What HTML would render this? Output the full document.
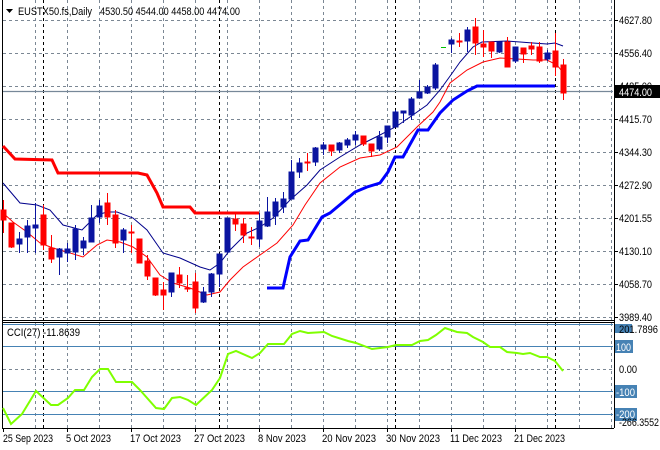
<!DOCTYPE html>
<html><head><meta charset="utf-8"><style>
html,body{margin:0;padding:0;background:#fff;width:660px;height:450px;overflow:hidden}
svg{display:block;font-family:"Liberation Sans","DejaVu Sans",sans-serif;font-size:11px}
</style></head><body>
<svg width="660" height="450" viewBox="0 0 660 450" xmlns="http://www.w3.org/2000/svg">
<rect width="660" height="450" fill="#fff"/>
<g stroke="#7b8794" stroke-width="1" stroke-dasharray="3,3" fill="none">
<path d="M3 20.5H613M3 53.5H613M3 86.5H613M3 119.5H613M3 152.5H613M3 185.5H613M3 218.5H613M3 251.5H613M3 284.5H613M3 317.5H613"/>
<path d="M35.5 0V320M67.5 0V320M99.5 0V320M131.5 0V320M163.5 0V320M195.5 0V320M227.5 0V320M259.5 0V320M291.5 0V320M323.5 0V320M355.5 0V320M387.5 0V320M419.5 0V320M451.5 0V320M483.5 0V320M515.5 0V320M547.5 0V320M579.5 0V320M611.5 0V320"/>
<path d="M35.5 323V428M67.5 323V428M99.5 323V428M131.5 323V428M163.5 323V428M195.5 323V428M227.5 323V428M259.5 323V428M291.5 323V428M323.5 323V428M355.5 323V428M387.5 323V428M419.5 323V428M451.5 323V428M483.5 323V428M515.5 323V428M547.5 323V428M579.5 323V428M611.5 323V428"/>
<path d="M3 369.5H613"/>
</g>
<g stroke="#000" stroke-width="1" stroke-dasharray="3,3" fill="none">
<path d="M43.5 0V320M219.5 0V320M395.5 0V320M555.5 0V320M43.5 323V428M219.5 323V428M395.5 323V428M555.5 323V428"/>
</g>
<path d="M3 91.5H613" stroke="#778899" stroke-width="1.2"/>
<g stroke="#4682b4" stroke-width="1">
<path d="M3 324.5H613M3 346.5H613M3 391.5H613M3 414.5H613"/>
</g>
<g stroke="#000" stroke-width="1" fill="none">
<path d="M2.5 0V428M614.5 0V428M2 320.5H614M2 322.5H614M2 428.5H614"/>
<path d="M614 20.5H618M614 53.5H618M614 86.5H618M614 119.5H618M614 152.5H618M614 185.5H618M614 218.5H618M614 251.5H618M614 284.5H618M614 317.5H618"/>
<path d="M3.5 428V432M67.5 428V432M131.5 428V432M195.5 428V432M259.5 428V432M323.5 428V432M387.5 428V432M451.5 428V432M515.5 428V432"/>
</g>
<polyline fill="none" stroke="#ff0000" stroke-width="3" points="3,146 15,159 52,160 58,173 138,173 147,175 157,193 163,207 190,207 195,213 259,213"/>
<polyline fill="none" stroke="#0000ff" stroke-width="3" points="267,288 283,288 290,257 300,241 308,240 322,217 330,213 342,203 355,192 367,187 380,183 388,172 395,157 403,157 418,130 428,130 440,113 453,100 467,91 477,86 555,86"/>
<polyline fill="none" stroke="#00008b" stroke-width="1" points="3,183 20,203 37,205 50,210 63,225 82,230 97,215 107,212 117,212 133,218 147,230 163,253 180,258 200,267 210,270 220,263 230,250 247,233 260,227 273,218 290,200 307,185 320,170 340,157 360,145 380,135 397,126 410,117 427,105 440,90 453,72 460,62 473,47 482,42 507,41 520,42 533,43 547,44 555,43 563,46"/>
<polyline fill="none" stroke="#ff0000" stroke-width="1" points="3,213 13,222 27,232 40,243 53,248 67,252 83,257 97,245 107,240 120,242 133,247 147,257 160,275 173,283 190,288 207,295 220,292 230,280 243,267 260,255 277,243 293,225 305,205 320,183 340,167 360,158 380,155 397,147 417,127 433,112 440,102 450,83 467,70 483,62 500,58 517,59 533,60 547,60 557,65 565,75"/>
<g stroke="#ff0000" fill="#ff0000">
<path d="M3.5 200V233M11.5 223V248M43.5 205V250M51.5 235V263M107.5 193V225M115.5 210V248M131.5 225V253M139.5 239V263M147.5 255V280M155.5 278V296M163.5 282V310M179.5 267V288M187.5 275V292M195.5 273V313M235.5 214V231M243.5 218V243M251.5 227V245M307.5 153V171M331.5 145V156M363.5 136V146M371.5 144V157M459.5 33V47M475.5 18V55M483.5 30V57M491.5 42V58M507.5 37V67M523.5 48V63M531.5 42V55M539.5 42V63M555.5 33V76M563.5 59V100" fill="none"/>
<rect x="1" y="210" width="5" height="10"/><rect x="9" y="223" width="5" height="24"/><rect x="41" y="215" width="5" height="30"/><rect x="49" y="248" width="5" height="11"/><rect x="105" y="203" width="5" height="14"/><rect x="113" y="215" width="5" height="28"/><rect x="129" y="232" width="5" height="1"/><rect x="137" y="239" width="5" height="24"/><rect x="145" y="261" width="5" height="15"/><rect x="153" y="278" width="5" height="17"/><rect x="161" y="290" width="5" height="5"/><rect x="177" y="275" width="5" height="8"/><rect x="185" y="288" width="5" height="1"/><rect x="193" y="282" width="5" height="26"/><rect x="233" y="219" width="5" height="5"/><rect x="241" y="224" width="5" height="11"/><rect x="249" y="237" width="5" height="1"/><rect x="305" y="162" width="5" height="1"/><rect x="329" y="145" width="5" height="6"/><rect x="361" y="136" width="5" height="8"/><rect x="369" y="144" width="5" height="7"/><rect x="457" y="41" width="5" height="1"/><rect x="473" y="27" width="5" height="16"/><rect x="481" y="44" width="5" height="3"/><rect x="489" y="42" width="5" height="9"/><rect x="505" y="42" width="5" height="25"/><rect x="521" y="48" width="5" height="6"/><rect x="529" y="46" width="5" height="3"/><rect x="537" y="47" width="5" height="14"/><rect x="553" y="51" width="5" height="16"/><rect x="561" y="65" width="5" height="28"/>
</g>
<g stroke="#0a14a0" fill="#0a14a0">
<path d="M19.5 232V253M27.5 220V253M35.5 203V253M59.5 248V275M67.5 243V262M75.5 225V260M83.5 237V255M91.5 205V242M99.5 200V223M123.5 228V253M171.5 273V297M203.5 287V303M211.5 273V297M219.5 254V287M227.5 218V252M259.5 213V247M267.5 197V227M275.5 198V225M283.5 192V213M291.5 160V199M299.5 158V178M315.5 147V166M323.5 142V155M339.5 142V153M347.5 138V148M355.5 131V145M379.5 131V151M387.5 126V143M395.5 110V127M403.5 111V123M411.5 97V120M419.5 80V98M427.5 85V94M435.5 63V90M451.5 38V53M467.5 27V52M499.5 42V53M515.5 47V63M547.5 50V61" fill="none"/>
<rect x="17" y="239" width="5" height="5"/><rect x="25" y="226" width="5" height="11"/><rect x="33" y="225" width="5" height="3"/><rect x="57" y="249" width="5" height="8"/><rect x="65" y="249" width="5" height="4"/><rect x="73" y="229" width="5" height="23"/><rect x="81" y="241" width="5" height="7"/><rect x="89" y="218" width="5" height="24"/><rect x="97" y="206" width="5" height="11"/><rect x="121" y="230" width="5" height="10"/><rect x="169" y="273" width="5" height="19"/><rect x="201" y="292" width="5" height="10"/><rect x="209" y="274" width="5" height="18"/><rect x="217" y="254" width="5" height="20"/><rect x="225" y="218" width="5" height="34"/><rect x="257" y="221" width="5" height="18"/><rect x="265" y="212" width="5" height="14"/><rect x="273" y="202" width="5" height="14"/><rect x="281" y="199" width="5" height="8"/><rect x="289" y="172" width="5" height="27"/><rect x="297" y="163" width="5" height="9"/><rect x="313" y="148" width="5" height="14"/><rect x="321" y="145" width="5" height="4"/><rect x="337" y="143" width="5" height="7"/><rect x="345" y="140" width="5" height="5"/><rect x="353" y="135" width="5" height="5"/><rect x="377" y="137" width="5" height="12"/><rect x="385" y="126" width="5" height="11"/><rect x="393" y="112" width="5" height="15"/><rect x="401" y="111" width="5" height="2"/><rect x="409" y="99" width="5" height="16"/><rect x="417" y="92" width="5" height="6"/><rect x="425" y="87" width="5" height="6"/><rect x="433" y="65" width="5" height="23"/><rect x="449" y="40" width="5" height="4"/><rect x="465" y="30" width="5" height="11"/><rect x="497" y="42" width="5" height="10"/><rect x="513" y="47" width="5" height="14"/><rect x="545" y="53" width="5" height="6"/>
</g>
<rect x="441" y="47" width="5" height="1" fill="#00c000"/>
<polyline fill="none" stroke="#7fff00" stroke-width="2" points="3,408 11,424 22,414 36,391 51,405 58,405 68,398 75,390 84,390 92,377 100,369 108,369 116,382 132,382 140,390 156,408 164,409 172,398 180,397 188,400 196,405 212,390 220,378 228,354 236,351 252,358 260,353 268,344 284,344 292,334 300,331 308,333 324,332 332,336 348,341 356,343 372,349 380,348 388,347 396,345 412,345 420,341 428,340 436,335 445,328 457,332 467,333 473,337 483,342 490,347 500,347 507,352 517,353 523,354 530,353 540,357 547,357 555,361 563,371"/>
<path d="M6 9H13L9.5 13Z" fill="#000"/>
<text x="18" y="15" fill="#000" textLength="74" lengthAdjust="spacingAndGlyphs">EUSTX50.fs,Daily</text>
<text x="100" y="15" fill="#000" textLength="140" lengthAdjust="spacingAndGlyphs">4530.50 4544.00 4458.00 4474.00</text>
<text x="7" y="336" fill="#000" textLength="73" lengthAdjust="spacingAndGlyphs">CCI(27) -11.8639</text>
<g fill="#000">
<text x="619" y="24" textLength="33" lengthAdjust="spacingAndGlyphs">4627.80</text>
<text x="619" y="57" textLength="33" lengthAdjust="spacingAndGlyphs">4556.40</text>
<text x="619" y="90" textLength="33" lengthAdjust="spacingAndGlyphs">4485.00</text>
<text x="619" y="123" textLength="33" lengthAdjust="spacingAndGlyphs">4415.70</text>
<text x="619" y="156" textLength="33" lengthAdjust="spacingAndGlyphs">4344.30</text>
<text x="619" y="189" textLength="33" lengthAdjust="spacingAndGlyphs">4272.90</text>
<text x="619" y="222" textLength="33" lengthAdjust="spacingAndGlyphs">4201.55</text>
<text x="619" y="255" textLength="33" lengthAdjust="spacingAndGlyphs">4130.10</text>
<text x="619" y="288" textLength="33" lengthAdjust="spacingAndGlyphs">4058.70</text>
<text x="619" y="321" textLength="33" lengthAdjust="spacingAndGlyphs">3989.40</text>
</g>
<rect x="615" y="85" width="45" height="13" fill="#000"/>
<text x="619" y="96" fill="#fff" textLength="33" lengthAdjust="spacingAndGlyphs">4474.00</text>
<rect x="615" y="324" width="17" height="9" fill="#4682b4"/>
<text x="619" y="333" fill="#000" textLength="39" lengthAdjust="spacingAndGlyphs">201.7896</text>
<rect x="615" y="340" width="18" height="13" fill="#4682b4"/>
<text x="616" y="351" fill="#fff" textLength="15" lengthAdjust="spacingAndGlyphs">100</text>
<text x="619" y="373" fill="#000" textLength="18" lengthAdjust="spacingAndGlyphs">0.00</text>
<rect x="615" y="385" width="22" height="13" fill="#4682b4"/>
<text x="616" y="396" fill="#fff" textLength="19" lengthAdjust="spacingAndGlyphs">-100</text>
<rect x="615" y="408" width="22" height="13" fill="#4682b4"/>
<text x="616" y="418" fill="#fff" textLength="19" lengthAdjust="spacingAndGlyphs">-200</text>
<text x="619" y="426" fill="#000" textLength="40" lengthAdjust="spacingAndGlyphs">-266.3552</text>
<g fill="#000">
<text x="3" y="442" textLength="50" lengthAdjust="spacingAndGlyphs">25 Sep 2023</text>
<text x="66" y="442" textLength="45" lengthAdjust="spacingAndGlyphs">5 Oct 2023</text>
<text x="130" y="442" textLength="51" lengthAdjust="spacingAndGlyphs">17 Oct 2023</text>
<text x="194" y="442" textLength="51" lengthAdjust="spacingAndGlyphs">27 Oct 2023</text>
<text x="258" y="442" textLength="48" lengthAdjust="spacingAndGlyphs">8 Nov 2023</text>
<text x="322" y="442" textLength="54" lengthAdjust="spacingAndGlyphs">20 Nov 2023</text>
<text x="386" y="442" textLength="54" lengthAdjust="spacingAndGlyphs">30 Nov 2023</text>
<text x="450" y="442" textLength="52" lengthAdjust="spacingAndGlyphs">11 Dec 2023</text>
<text x="514" y="442" textLength="51" lengthAdjust="spacingAndGlyphs">21 Dec 2023</text>
</g>
</svg>
</body></html>
